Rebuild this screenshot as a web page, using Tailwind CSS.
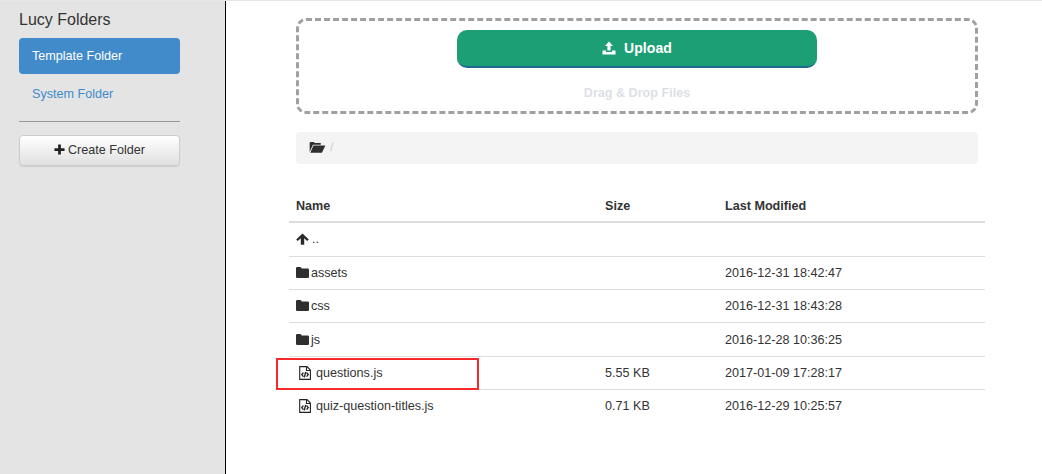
<!doctype html>
<html>
<head>
<meta charset="utf-8">
<script src="https://cdn.jsdelivr.net/npm/@tailwindcss/browser@4"></script>
</head>
<body class="bg-white overflow-hidden font-['Liberation_Sans',Arial,sans-serif] text-[#333] text-[12.6px] leading-[20px]">
<div class="w-[1042px] h-[474px] border-t border-[#e7e7e7] flex">
  <aside class="w-[226px] h-full shrink-0 bg-[#e4e4e4] border-r border-black pl-[19px] pr-[45px] pt-[10px]">
    <div class="text-[16px] leading-[18px] mb-[9px]">Lucy Folders</div>
    <div class="h-[36px] bg-[#428bca] rounded-[4px] text-white pl-[13px] flex items-center pb-[1px]">Template Folder</div>
    <div class="h-[36px] mt-[2px] text-[#428bca] pl-[13px] flex items-center pb-[1px]">System Folder</div>
    <div class="h-px bg-[#999] mt-[9px] mb-[13px]"></div>
    <button class="w-full h-[31px] rounded-[4px] border border-[#ccc] bg-gradient-to-b from-white to-[#e0e0e0] flex items-center justify-center gap-[3px] text-[#333] shadow-[0_1px_1px_rgba(0,0,0,0.1)] pb-[2px]">
      <svg class="w-[11px] h-[11px]" viewBox="0 0 12 12"><path d="M4.5 0.5h3v4h4v3h-4v4h-3v-4h-4v-3h4z" fill="#222"/></svg>
      Create Folder
    </button>
  </aside>
  <main class="flex-1 pl-[63px] pt-[17px]">
    <div class="w-[682px] ml-[7px] h-[96px] border-[3px] border-dashed border-[#a0a0a0] rounded-[10px] flex flex-col items-center pt-[9px]">
      <button class="w-[360px] h-[38px] rounded-[10px] bg-[#1d9f75] border-b-2 border-[#1d6a8f] text-white text-[14px] tracking-[0.1px] font-bold flex items-center justify-center gap-[8px]">
        <svg class="w-[14px] h-[14px]" viewBox="0 0 14 14"><path d="M7 0.5L11 5H8.6v4.5H5.4V5H3zM0.5 9.5h3.5v1.6h6V9.5h3.5v4h-13z" fill="#fff"/></svg>
        Upload
      </button>
      <div class="mt-[15px] font-bold text-[#dcdfe6] text-center">Drag &amp; Drop Files</div>
    </div>
    <div class="w-[682px] ml-[7px] mt-[18px] h-[32px] bg-[#f4f4f4] rounded-[4px] flex items-center pl-[13px] gap-[4px] pb-[2px]">
      <svg class="w-[17px] h-[12px]" viewBox="0 0 18 13"><path d="M0.5 12V2.2Q0.5 1 1.7 1H5L6 2.3H12.5V4H4L0.5 12ZM4.6 5H17.5L13.8 12.6H1.2Z" fill="#2f2f2f"/></svg>
      <span class="text-[#ccc]">/</span>
    </div>
    <table class="w-[696px] mt-[18px] border-collapse table-fixed">
      <thead>
        <tr class="h-[40px] border-b-2 border-[#ddd] text-left font-bold">
          <th class="w-[309px] pl-[7px] pt-[8px] font-bold">Name</th><th class="w-[120px] pl-[7px] pt-[8px] font-bold">Size</th><th class="pl-[7px] pt-[8px] font-bold">Last Modified</th>
        </tr>
      </thead>
      <tbody>
        <tr class="h-[34px] border-b border-[#ddd]">
          <td class="pl-[7px]"><div class="flex items-center gap-[3px]"><svg class="w-[13px] h-[12px]" viewBox="0 0 13 12"><path d="M6.5 0.5L12.8 6.4 11.2 8 8.2 5.2V11.8H4.8V5.2L1.8 8 0.2 6.4z" fill="#2a2a2a"/></svg><span>..</span></div></td><td></td><td></td>
        </tr>
        <tr class="h-[33px] border-b border-[#ddd]">
          <td class="pl-[7px]"><div class="flex items-center gap-[2px]"><svg class="w-[13px] h-[11px]" viewBox="0 0 13 11"><path d="M0 1.2Q0 0 1.2 0H4.6L5.8 1.6H11.8Q13 1.6 13 2.8V9.8Q13 11 11.8 11H1.2Q0 11 0 9.8z" fill="#2f2f2f"/></svg><span>assets</span></div></td><td></td><td class="pl-[7px]">2016-12-31 18:42:47</td>
        </tr>
        <tr class="h-[33px] border-b border-[#ddd]">
          <td class="pl-[7px]"><div class="flex items-center gap-[2px]"><svg class="w-[13px] h-[11px]" viewBox="0 0 13 11"><path d="M0 1.2Q0 0 1.2 0H4.6L5.8 1.6H11.8Q13 1.6 13 2.8V9.8Q13 11 11.8 11H1.2Q0 11 0 9.8z" fill="#2f2f2f"/></svg><span>css</span></div></td><td></td><td class="pl-[7px]">2016-12-31 18:43:28</td>
        </tr>
        <tr class="h-[34px] border-b border-[#ddd]">
          <td class="pl-[7px] pt-[1px]"><div class="flex items-center gap-[2px]"><svg class="w-[13px] h-[11px]" viewBox="0 0 13 11"><path d="M0 1.2Q0 0 1.2 0H4.6L5.8 1.6H11.8Q13 1.6 13 2.8V9.8Q13 11 11.8 11H1.2Q0 11 0 9.8z" fill="#2f2f2f"/></svg><span>js</span></div></td><td></td><td class="pl-[7px] pt-[1px]">2016-12-28 10:36:25</td>
        </tr>
        <tr class="h-[33px] border-b border-[#ddd]">
          <td class="pl-[10px]"><div class="flex items-center gap-[5px]"><svg class="w-[12px] h-[14px]" viewBox="0 0 12 14" fill="none" stroke="#222" stroke-width="1.1"><path d="M.7 .6H8L11.4 4V13.4H.7zM7.5 .6V4.5H11.4"/><path stroke-width="1.4" d="M4.4 6.6L2.8 8.6 4.4 10.6M7.6 6.6L9.2 8.6 7.6 10.6M6.7 5.8L5.3 11.4"/></svg><span>questions.js</span></div></td><td class="pl-[7px]">5.55 KB</td><td class="pl-[7px]">2017-01-09 17:28:17</td>
        </tr>
        <tr class="h-[33px]">
          <td class="pl-[10px]"><div class="flex items-center gap-[5px]"><svg class="w-[12px] h-[14px]" viewBox="0 0 12 14" fill="none" stroke="#222" stroke-width="1.1"><path d="M.7 .6H8L11.4 4V13.4H.7zM7.5 .6V4.5H11.4"/><path stroke-width="1.4" d="M4.4 6.6L2.8 8.6 4.4 10.6M7.6 6.6L9.2 8.6 7.6 10.6M6.7 5.8L5.3 11.4"/></svg><span>quiz-question-titles.js</span></div></td><td class="pl-[7px]">0.71 KB</td><td class="pl-[7px]">2016-12-29 10:25:57</td>
        </tr>
      </tbody>
    </table>
  </main>
</div>
<div class="absolute left-[276px] top-[358px] w-[203px] h-[32px] border-[2px] border-[#f62a2a]"></div>
</body>
</html>
